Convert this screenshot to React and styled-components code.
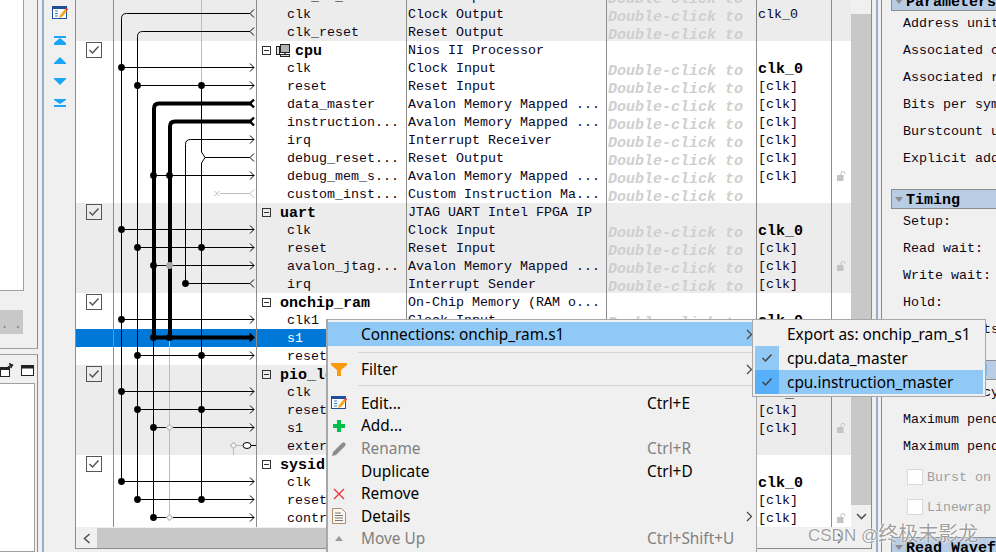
import React from 'react';
import styled, { createGlobalStyle } from 'styled-components';

const GlobalStyle = createGlobalStyle`
  html, body { margin: 0; padding: 0; background: #f0f0f0; }
  * { box-sizing: border-box; }
`;

const Page = styled.div`
  position: relative;
  width: 996px;
  height: 552px;
  overflow: hidden;
  display: flex;
  background: #f0f0f0;
  font-family: "Liberation Mono", monospace;
  font-size: 13.33px;
  color: #0c0618;
`;

/* left dock */
const LeftDock = styled.div`
  width: 38px;
  flex: none;
  display: flex;
  flex-direction: column;
`;
const TopPanel = styled.div`
  height: 349px;
  border-right: 1px solid #8c8c8c;
  border-bottom: 1px solid #a0a0a0;
`;
const WhiteBox = styled.div`
  width: 24px;
  height: 291px;
  background: #fff;
  border-right: 1px solid #a0a0a0;
  border-bottom: 1px solid #a0a0a0;
`;
const DotsButton = styled.div`
  width: 23px;
  height: 24px;
  margin-top: 19px;
  padding-left: 1px;
  background: #c8c8c8;
  color: #888;
  font-size: 12px;
  font-weight: bold;
  letter-spacing: 6px;
  line-height: 30px;
`;
const BottomPanel = styled.div`
  flex: 1;
  margin-top: 5px;
  border-top: 1px solid #a0a0a0;
  border-right: 1px solid #8c8c8c;
  display: flex;
  flex-direction: column;
`;
const PanelTools = styled.div`
  height: 28px;
  display: flex;
  align-items: center;
  gap: 6px;
  padding-top: 2px;
`;
const PanelList = styled.div`
  flex: 1;
  width: 35px;
  background: #fff;
  border: 1px solid #a0a0a0;
  border-left: none;
`;

const Splitter = styled.div`
  width: 6px;
  flex: none;
  display: flex;
  justify-content: flex-end;
`;
const BlueLine = styled.div`
  width: 2px;
  background: #94aecb;
`;

/* arrows toolbar */
const SideTools = styled.div`
  width: 31px;
  flex: none;
  padding-top: 6px;
  display: flex;
  flex-direction: column;
  align-items: center;
`;
const ToolIcon = styled.svg`
  display: block;
  margin-top: ${p => p.$top}px;
`;

/* table */
const TableFrame = styled.div`
  width: 797px;
  height: 549px;
  flex: none;
  display: flex;
  flex-direction: column;
  border: 1px solid #8c8c8c;
  border-top: none;
`;
const TableTop = styled.div`
  height: 527px;
  display: flex;
`;
const Rows = styled.div`
  position: relative;
  width: 775px;
  overflow: hidden;
  background: #fff;
`;
const RowsInner = styled.div`
  margin-top: -13px;
`;
const Row = styled.div`
  display: grid;
  grid-template-columns: 38px 143px 150px 200px 150px 75px 19px;
  grid-template-rows: 18px;
  height: 18px;
  line-height: 18px;
  white-space: nowrap;
  background: ${p => (p.$selected ? '#0078d7' : p.$shade ? '#ececec' : '#fff')};
  color: ${p => (p.$selected ? '#fff' : 'inherit')};
`;
const Cell = styled.div`
  position: relative;
  height: 18px;
  padding-top: 1px;
  padding-left: ${p => p.$pad || 0}px;
  border-right: 1px solid #8c8c8c;
  display: flex;
  align-items: flex-start;
  min-width: 0;
`;
const PlainCell = styled.div`
  display: flex;
  align-items: center;
  justify-content: center;
`;
const Bold = styled.span`
  padding-top: 1px;
  padding-left: ${p => p.$indent || 0}px;
  font-weight: bold;
  font-size: 15px;
  color: #000;
`;
const Hint = styled.span`
  padding-top: 3px;
  font-weight: bold;
  font-style: italic;
  font-size: 15px;
  color: #cfcfcf;
`;
const CheckBox = styled.span`
  position: absolute;
  left: 10px;
  top: 1px;
  width: 16px;
  height: 16px;
  border: 1px solid #555;
  display: flex;
  align-items: center;
  justify-content: center;
`;
const TreeToggle = styled.span`
  position: relative;
  display: inline-block;
  flex: none;
  width: 9px;
  height: 9px;
  margin-top: 4px;
  margin-right: 5px;
  border: 1px solid #333;
  &::after {
    content: '';
    position: absolute;
    left: 1px;
    right: 1px;
    top: 3px;
    height: 1px;
    background: #333;
  }
`;
const WireLayer = styled.svg`
  position: absolute;
  left: 38px;
  top: 0;
`;

const VScroll = styled.div`
  width: 20px;
  flex: none;
  display: flex;
  flex-direction: column;
  background: #f0f0f0;
`;
const VThumb = styled.div`
  margin-top: 14px;
  height: 491px;
  background: #c8c8c8;
`;
const VArrow = styled.div`
  flex: 1;
  display: flex;
  align-items: center;
  justify-content: center;
`;
const HScroll = styled.div`
  height: 20px;
  display: flex;
  align-items: center;
  margin-top: 1px;
`;
const HArrow = styled.div`
  width: 21px;
  height: 100%;
  display: flex;
  align-items: center;
  justify-content: center;
`;
const HThumb = styled.div`
  width: 620px;
  height: 100%;
  background: #c8c8c8;
`;
const HEnd = styled.div`
  flex: 1;
  display: flex;
  justify-content: flex-end;
  padding-right: 27px;
`;

/* right panel */
const RightPanel = styled.div`
  flex: 1;
  min-width: 0;
  overflow: hidden;
  margin-left: 3px;
  padding-left: 9px;
  border-left: 1px solid #8c8c8c;
  white-space: nowrap;
`;
const PanelInner = styled.div`
  margin-top: -9px;
`;
const SectionHead = styled.div`
  width: 140px;
  height: 20px;
  margin-top: ${p => p.$top || 0}px;
  display: flex;
  align-items: flex-start;
  gap: 3px;
  padding-left: 3px;
  padding-top: 2px;
  line-height: 18px;
  background: #b8cce4;
  border: 1px solid #8c8c8c;
  border-right: none;
  font-weight: bold;
  font-size: 15px;
  color: #000;
  &::before {
    content: '';
    width: 0;
    height: 0;
    margin-top: 5px;
    border: 4px solid transparent;
    border-top: 5px solid #8c8c8c;
    border-bottom: none;
  }
`;
const Field = styled.div`
  height: 27px;
  line-height: 25px;
  padding-left: 12px;
`;
const CheckField = styled.div`
  height: 30px;
  padding-left: 16px;
  display: flex;
  align-items: center;
  gap: 4px;
  color: #a0a0a0;
`;
const CheckGroup = styled.div`
  padding-top: 1px;
`;
const GhostBox = styled.span`
  width: 16px;
  height: 16px;
  flex: none;
  background: #fff;
  border: 1px solid #d9d9d9;
`;

/* popups */
const Menu = styled.div`
  position: absolute;
  left: 326px;
  top: 319px;
  width: 431px;
  height: 240px;
  padding-top: 2px;
  background: #f0f0f0;
  border: 1px solid #a8a8a8;
  border-width: 1px 1px 0 2px;
  font-family: "Noto Sans", sans-serif;
  font-size: 15.4px;
  color: #000;
`;
const SubMenu = styled.div`
  position: absolute;
  left: 752px;
  top: 319px;
  width: 234px;
  height: 78px;
  padding: 2px;
  background: #f0f0f0;
  border: 1px solid #a8a8a8;
  font-family: "Noto Sans", sans-serif;
  font-size: 15.4px;
  color: #000;
`;
const MenuItem = styled.div`
  display: flex;
  align-items: center;
  height: ${p => p.$h || 22.6}px;
  background: ${p => (p.$active ? '#90c8f6' : 'transparent')};
  color: ${p => (p.$disabled ? '#808080' : '#000')};
  white-space: nowrap;
`;
const Gutter = styled.span`
  width: 33px;
  flex: none;
  align-self: stretch;
  padding-right: 11px;
  display: flex;
  align-items: center;
  justify-content: center;
`;
const MenuLabel = styled.span`
  width: 286px;
  flex: none;
`;
const Shortcut = styled.span`
  flex: 1;
`;
const Caret = styled.span`
  width: 14px;
  flex: none;
  display: flex;
  justify-content: center;
`;
const Separator = styled.div`
  height: 1px;
  margin: ${p => p.$before}px 0 ${p => p.$after}px 30px;
  background: #d5d5d5;
`;
const SubItem = styled.div`
  display: flex;
  align-items: center;
  height: 24px;
  background: ${p => (p.$active ? '#90c8f6' : 'transparent')};
  white-space: nowrap;
`;
const SubCheck = styled.span`
  width: 24px;
  height: 24px;
  flex: none;
  margin-right: 8px;
  display: flex;
  align-items: center;
  justify-content: center;
  background: ${p => p.$bg || 'transparent'};
`;
const Watermark = styled.div`
  position: absolute;
  left: 808px;
  top: 523px;
  font-family: "Liberation Sans", "Noto Sans CJK SC", sans-serif;
  font-size: 17px;
  line-height: 22px;
  color: rgba(95, 95, 95, 0.6);
  text-shadow: 0 0 2px #fff, 0 0 2px #fff;
  white-space: nowrap;
`;
const WatermarkName = styled.span`
  font-size: 20px;
`;

/* drawings */
const EditIcon = () => (
  <svg width="16" height="14" viewBox="0 0 16 14">
    <rect x="0.5" y="0.5" width="14" height="12" fill="#fff" stroke="#1f4f9c" />
    <rect x="0" y="0" width="15" height="3" fill="#1f4f9c" />
    <path d="M3 5h3M3 7.5h3M3 10h3" stroke="#2f7fd0" />
    <path d="M7 12l1-3 5-6 2 2-5 6z" fill="#f5a623" />
    <path d="M13 3l2 2 1-2-1-1z" fill="#e53935" />
  </svg>
);
const TopArrow = () => (
  <ToolIcon $top={16} width="12" height="9" viewBox="0 0 12 9">
    <path d="M0 0h12v2H0zM6 2l6 5v2H0V7z" fill="#1aa5f5" />
  </ToolIcon>
);
const UpArrow = () => (
  <ToolIcon $top={12} width="12" height="7" viewBox="0 0 12 7">
    <path d="M6 0l6 6v1H0V6z" fill="#1aa5f5" />
  </ToolIcon>
);
const DownArrow = () => (
  <ToolIcon $top={14} width="12" height="7" viewBox="0 0 12 7">
    <path d="M0 0h12v1L6 7 0 1z" fill="#1aa5f5" />
  </ToolIcon>
);
const BottomArrow = () => (
  <ToolIcon $top={14} width="12" height="8" viewBox="0 0 12 8">
    <path d="M0 0h12v1L6 5 0 1zM0 6h12v2H0z" fill="#1aa5f5" />
  </ToolIcon>
);
const Check = ({ color = '#555' }) => (
  <svg width="12" height="10" viewBox="0 0 12 10">
    <path d="M1.5 5l3 3 6-6.5" fill="none" stroke={color} strokeWidth="1.5" />
  </svg>
);
const CpuIcon = () => (
  <svg width="14" height="13" viewBox="0 0 14 13" style={{ marginTop: 2, marginRight: 5, flex: 'none' }}>
    <rect x="4.5" y="0.5" width="9" height="8" fill="#b4b4b4" stroke="#222" />
    <rect x="0.5" y="2.5" width="3" height="8" fill="#e4e4e4" stroke="#222" />
    <path d="M9 9v2" stroke="#222" strokeWidth="1.4" />
    <rect x="4.5" y="10.5" width="9" height="2" fill="#ddd" stroke="#222" />
  </svg>
);
const LockIcon = () => (
  <svg width="9" height="10" viewBox="0 0 9 10">
    <rect x="0" y="4" width="6.5" height="6" fill="#c4c4c4" />
    <path d="M4 4V2a1.8 1.8 0 0 1 3.6 0v1" fill="none" stroke="#c4c4c4" />
  </svg>
);
const ChevronRight = () => (
  <svg width="7" height="11" viewBox="0 0 7 11">
    <path d="M1 1l4.5 4.5L1 10" fill="none" stroke="#444" strokeWidth="1.2" />
  </svg>
);
const FilterIcon = () => (
  <svg width="16" height="13" viewBox="0 0 16 13">
    <path d="M0 0h16v2l-6 5v6H6V7L0 2z" fill="#f99a0c" />
  </svg>
);
const PlusIcon = () => (
  <svg width="12" height="12" viewBox="0 0 12 12">
    <path d="M4 0h4v4h4v4H8v4H4V8H0V4h4z" fill="#00c04a" />
  </svg>
);
const PencilIcon = () => (
  <svg width="15" height="15" viewBox="0 0 15 15">
    <path d="M0 15l1-4 9-9a2 2 0 0 1 3 3l-9 9z" fill="#8c8c8c" />
  </svg>
);
const CrossIcon = () => (
  <svg width="12" height="12" viewBox="0 0 12 12">
    <path d="M1 1l10 10M11 1L1 11" stroke="#e8303a" strokeWidth="1.3" />
  </svg>
);
const DocIcon = () => (
  <svg width="14" height="16" viewBox="0 0 14 16">
    <path d="M.5.5h9l4 4v11H.5z" fill="#fbf7ef" stroke="#a98f70" />
    <path d="M3 5h6M3 7.5h8M3 10h8M3 12.5h8" stroke="#777" />
  </svg>
);
const SmallUp = () => (
  <svg width="8" height="5" viewBox="0 0 8 5">
    <path d="M4 0l4 5H0z" fill="#9a9a9a" />
  </svg>
);
const PopOutIcon = () => (
  <svg width="15" height="15" viewBox="0 0 15 15">
    <rect x="0.5" y="4.5" width="9" height="9" fill="#fff" stroke="#222" />
    <rect x="0" y="4" width="10" height="3" fill="#222" />
    <path d="M7 5l4-3M9 0.5l3.5 1.5-2 3" fill="none" stroke="#222" strokeWidth="1.4" />
  </svg>
);
const WindowIcon = () => (
  <svg width="13" height="11" viewBox="0 0 13 11">
    <rect x="0.5" y="0.5" width="12" height="10" fill="#fff" stroke="#222" />
    <rect x="0" y="0" width="13" height="3.5" fill="#222" />
  </svg>
);

const Y = c => c - 0.5;

const Wires = () => {
  const inArrow = (y, color = '#000', w = 1) => (
    <path d={`M250 ${y - 4}L254 ${y}L250 ${y + 4}`} fill="none" stroke={color} strokeWidth={w} />
  );
  const outArrow = (y, color = '#000', w = 1) => (
    <path d={`M254 ${y - 4}L250 ${y}L254 ${y + 4}`} fill="none" stroke={color} strokeWidth={w} />
  );
  const dot = (x, c, color = '#000') => <circle key={`${x}-${c}`} cx={x} cy={Y(c)} r="3.4" fill={color} />;
  const hollow = (x, c) => (
    <path
      key={`h${x}-${c}`}
      d={`M${x} ${Y(c) - 3}l3 3l-3 3l-3-3z`}
      fill="#fff"
      stroke="#bcbcbc"
      strokeWidth="1.2"
    />
  );
  const tap = (x, c) => (
    <g key={`t${x}-${c}`}>
      <path d={`M${x} ${Y(c)}H254`} stroke="#000" fill="none" />
      {inArrow(Y(c))}
      {dot(x, c)}
    </g>
  );
  return (
    <WireLayer width="143" height="527" viewBox="114 0 143 527">
      {/* grey runs */}
      <path d="M201.5 0V86M169.5 338V518M233.5 446V455" stroke="#bcbcbc" fill="none" />
      <path d="M220 193.5H250M254 189.5L250 193.5L254 197.5" stroke="#bcbcbc" fill="none" />
      <path d="M214.5 191l5 5M219.5 191l-5 5" stroke="#bcbcbc" fill="none" />

      {/* clock */}
      <path d="M121.5 482V18.5Q121.5 13.5 126.5 13.5H250" stroke="#000" fill="none" />
      {outArrow(13.5)}
      {/* reset */}
      <path d="M137.5 500V36.5Q137.5 31.5 142.5 31.5H250" stroke="#000" fill="none" />
      {outArrow(31.5)}
      {/* reset sources, debug_reset joins here */}
      <path d="M201.5 86V152L205 157.5H250M201.5 500V163L205 157.5" stroke="#000" fill="none" />
      {outArrow(157.5)}
      {/* irq */}
      <path d="M185.5 283V144.5Q185.5 139.5 190.5 139.5H254" stroke="#000" fill="none" />
      {inArrow(139.5)}
      <path d="M185.5 283.5H250" stroke="#000" fill="none" />
      {outArrow(283.5)}
      {dot(185.5, 284)}

      {/* masters */}
      <path d="M153.5 338V518" stroke="#000" fill="none" />
      <path d="M154 338V108.5Q154 103.5 159 103.5H252" stroke="#000" strokeWidth="4" fill="none" />
      {outArrow(103.5, '#000', 2.4)}
      <path d="M170 338V126.5Q170 121.5 175 121.5H252" stroke="#000" strokeWidth="4" fill="none" />
      {outArrow(121.5, '#000', 2.4)}
      <path d="M154 337.5H251" stroke="#000" strokeWidth="4" fill="none" />
      <path d="M250 333.5L254.5 337.5L250 341.5z" fill="#000" stroke="#000" />

      {[68, 230, 320, 392, 482].map(c => tap(121.5, c))}
      {[86, 248, 356, 410, 500].map(c => tap(137.5, c))}
      {[86, 248, 356, 410, 500].map(c => dot(201.5, c))}
      {[176, 266, 428, 518].map(c => tap(153.5, c))}
      {dot(153.5, 338)}
      {dot(169.5, 338)}
      {dot(169.5, 176)}
      {dot(169.5, 266, '#a8a8a8')}
      {hollow(169.5, 428)}
      {hollow(169.5, 518)}
      {hollow(233.5, 446)}
      <path d="M237 445.5H243" stroke="#bcbcbc" fill="none" />
      <ellipse cx="247" cy="445.5" rx="4" ry="3" fill="#fff" stroke="#000" />
      <path d="M251 445.5H256" stroke="#000" fill="none" />
    </WireLayer>
  );
};

const HINT = 'Double-click to';
const groups = [
  {
    rows: [
      { name: 'clk_in_reset', desc: 'Reset Input', hint: true },
      { name: 'clk', desc: 'Clock Output', hint: true, clock: 'clk_0' },
      { name: 'clk_reset', desc: 'Reset Output', hint: true },
    ],
    shade: true,
  },
  {
    head: { name: 'cpu', desc: 'Nios II Processor', icon: true },
    rows: [
      { name: 'clk', desc: 'Clock Input', hint: true, clock: 'clk_0', strong: true },
      { name: 'reset', desc: 'Reset Input', hint: true, clock: '[clk]' },
      { name: 'data_master', desc: 'Avalon Memory Mapped ...', hint: true, clock: '[clk]' },
      { name: 'instruction...', desc: 'Avalon Memory Mapped ...', hint: true, clock: '[clk]' },
      { name: 'irq', desc: 'Interrupt Receiver', hint: true, clock: '[clk]' },
      { name: 'debug_reset...', desc: 'Reset Output', hint: true, clock: '[clk]' },
      { name: 'debug_mem_s...', desc: 'Avalon Memory Mapped ...', hint: true, clock: '[clk]', lock: true },
      { name: 'custom_inst...', desc: 'Custom Instruction Ma...', hint: true },
    ],
  },
  {
    head: { name: 'uart', desc: 'JTAG UART Intel FPGA IP' },
    shade: true,
    rows: [
      { name: 'clk', desc: 'Clock Input', hint: true, clock: 'clk_0', strong: true },
      { name: 'reset', desc: 'Reset Input', hint: true, clock: '[clk]' },
      { name: 'avalon_jtag...', desc: 'Avalon Memory Mapped ...', hint: true, clock: '[clk]', lock: true },
      { name: 'irq', desc: 'Interrupt Sender', hint: true, clock: '[clk]' },
    ],
  },
  {
    head: { name: 'onchip_ram', desc: 'On-Chip Memory (RAM o...' },
    rows: [
      { name: 'clk1', desc: 'Clock Input', hint: true, clock: 'clk_0', strong: true },
      { name: 's1', selected: true },
      { name: 'reset', clock: '[clk]' },
    ],
  },
  {
    head: { name: 'pio_led' },
    shade: true,
    rows: [
      { name: 'clk', clock: 'clk_0', strong: true },
      { name: 'reset', clock: '[clk]' },
      { name: 's1', clock: '[clk]', lock: true },
      { name: 'external' },
    ],
  },
  {
    head: { name: 'sysid' },
    rows: [
      { name: 'clk', clock: 'clk_0', strong: true },
      { name: 'reset', clock: '[clk]' },
      { name: 'control', clock: '[clk]', lock: true },
    ],
  },
];

const fieldsTop = ['Address units', 'Associated clock', 'Associated reset', 'Bits per symbol', 'Burstcount units', 'Explicit address span'];
const fieldsTiming = ['Setup:', 'Read wait:', 'Write wait:', 'Hold:', 'Timing units:'];
const fieldsPipe = ['Read latency:', 'Maximum pending read', 'Maximum pending write'];

export default function App() {
  return (
    <Page>
      <GlobalStyle />
      <LeftDock>
        <TopPanel>
          <WhiteBox />
          <DotsButton>..</DotsButton>
        </TopPanel>
        <BottomPanel>
          <PanelTools>
            <PopOutIcon />
            <WindowIcon />
          </PanelTools>
          <PanelList />
        </BottomPanel>
      </LeftDock>
      <Splitter>
        <BlueLine />
      </Splitter>
      <SideTools>
        <EditIcon />
        <TopArrow />
        <UpArrow />
        <DownArrow />
        <BottomArrow />
      </SideTools>
      <TableFrame>
        <TableTop>
          <Rows>
            <RowsInner>
              {groups.map(group => (
                <React.Fragment key={group.head ? group.head.name : 'clock'}>
                  {group.head && (
                    <Row $shade={group.shade}>
                      <Cell>
                        <CheckBox>
                          <Check />
                        </CheckBox>
                      </Cell>
                      <Cell />
                      <Cell $pad={5}>
                        <TreeToggle />
                        {group.head.icon && <CpuIcon />}
                        <Bold $indent={group.head.icon ? 0 : 4}>{group.head.name}</Bold>
                      </Cell>
                      <Cell $pad={1}>{group.head.desc}</Cell>
                      <Cell />
                      <Cell />
                      <PlainCell />
                    </Row>
                  )}
                  {group.rows.map(row => (
                    <Row key={row.name} $shade={group.shade} $selected={row.selected}>
                      <Cell />
                      <Cell />
                      <Cell $pad={30}>{row.name}</Cell>
                      <Cell $pad={1}>{row.desc}</Cell>
                      <Cell $pad={1}>{row.hint && <Hint>{HINT}</Hint>}</Cell>
                      <Cell $pad={1}>{row.strong ? <Bold>{row.clock}</Bold> : row.clock}</Cell>
                      <PlainCell>{row.lock && <LockIcon />}</PlainCell>
                    </Row>
                  ))}
                </React.Fragment>
              ))}
            </RowsInner>
            <Wires />
          </Rows>
          <VScroll>
            <VThumb />
            <VArrow>
              <svg width="11" height="7" viewBox="0 0 11 7">
                <path d="M1 1l4.5 4.5L10 1" fill="none" stroke="#555" strokeWidth="1.6" />
              </svg>
            </VArrow>
          </VScroll>
        </TableTop>
        <HScroll>
          <HArrow>
            <svg width="8" height="11" viewBox="0 0 8 11">
              <path d="M6.5 1L1.5 5.5l5 4.5" fill="none" stroke="#555" strokeWidth="1.6" />
            </svg>
          </HArrow>
          <HThumb />
          <HEnd>
            <ChevronRight />
          </HEnd>
        </HScroll>
      </TableFrame>
      <Splitter>
        <BlueLine />
      </Splitter>
      <RightPanel>
        <PanelInner>
          <SectionHead>Parameters</SectionHead>
          {fieldsTop.map(f => (
            <Field key={f}>{f}</Field>
          ))}
          <SectionHead $top={16}>Timing</SectionHead>
          {fieldsTiming.map(f => (
            <Field key={f}>{f}</Field>
          ))}
          <SectionHead $top={16}>Pipelined</SectionHead>
          {fieldsPipe.map(f => (
            <Field key={f}>{f}</Field>
          ))}
          <CheckGroup>
            <CheckField>
              <GhostBox />
              Burst on burst
            </CheckField>
            <CheckField>
              <GhostBox />
              Linewrap bursts
            </CheckField>
          </CheckGroup>
          <SectionHead $top={15}>Read Waveforms</SectionHead>
        </PanelInner>
      </RightPanel>

      <Menu>
        <MenuItem $active $h={24}>
          <Gutter />
          <MenuLabel>Connections: onchip_ram.s1</MenuLabel>
          <Shortcut />
          <Caret>
            <ChevronRight />
          </Caret>
        </MenuItem>
        <Separator $before={6} $after={5} />
        <MenuItem $h={23}>
          <Gutter>
            <FilterIcon />
          </Gutter>
          <MenuLabel>Filter</MenuLabel>
          <Shortcut />
          <Caret>
            <ChevronRight />
          </Caret>
        </MenuItem>
        <Separator $before={4} $after={6} />
        <MenuItem>
          <Gutter>
            <EditIcon />
          </Gutter>
          <MenuLabel>Edit...</MenuLabel>
          <Shortcut>Ctrl+E</Shortcut>
        </MenuItem>
        <MenuItem>
          <Gutter>
            <PlusIcon />
          </Gutter>
          <MenuLabel>Add...</MenuLabel>
        </MenuItem>
        <MenuItem $disabled>
          <Gutter>
            <PencilIcon />
          </Gutter>
          <MenuLabel>Rename</MenuLabel>
          <Shortcut>Ctrl+R</Shortcut>
        </MenuItem>
        <MenuItem>
          <Gutter />
          <MenuLabel>Duplicate</MenuLabel>
          <Shortcut>Ctrl+D</Shortcut>
        </MenuItem>
        <MenuItem>
          <Gutter>
            <CrossIcon />
          </Gutter>
          <MenuLabel>Remove</MenuLabel>
        </MenuItem>
        <MenuItem>
          <Gutter>
            <DocIcon />
          </Gutter>
          <MenuLabel>Details</MenuLabel>
          <Shortcut />
          <Caret>
            <ChevronRight />
          </Caret>
        </MenuItem>
        <MenuItem $disabled>
          <Gutter>
            <SmallUp />
          </Gutter>
          <MenuLabel>Move Up</MenuLabel>
          <Shortcut>Ctrl+Shift+U</Shortcut>
        </MenuItem>
      </Menu>

      <SubMenu>
        <SubItem>
          <SubCheck />
          Export as: onchip_ram_s1
        </SubItem>
        <SubItem>
          <SubCheck $bg="#90c8f6">
            <Check color="#444" />
          </SubCheck>
          cpu.data_master
        </SubItem>
        <SubItem $active>
          <SubCheck $bg="#58b0fa">
            <Check color="#444" />
          </SubCheck>
          cpu.instruction_master
        </SubItem>
      </SubMenu>
      <Watermark>
        CSDN @<WatermarkName>终极末影龙</WatermarkName>
      </Watermark>
    </Page>
  );
}
